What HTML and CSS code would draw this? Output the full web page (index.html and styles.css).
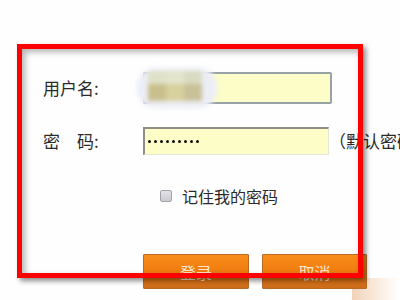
FILE: index.html
```html
<!DOCTYPE html>
<html lang="zh-CN">
<head>
<meta charset="utf-8">
<title>登录</title>
<link rel="stylesheet" href="styles.css">
</head>
<body>
<div class="page">
  <form class="login">
    <div class="row row-user">
      <label class="label">用户名:</label>
      <div class="field field-user">
        <div class="mosaic">
          <span class="m m1"></span><span class="m m2"></span><span class="m m3"></span>
          <span class="m m4"></span><span class="m m5"></span><span class="m m6"></span>
        </div>
      </div>
    </div>
    <div class="row row-pwd">
      <label class="label">密　码:</label>
      <div class="field field-pwd">
        <span class="dot"></span><span class="dot"></span><span class="dot"></span>
        <span class="dot"></span><span class="dot"></span><span class="dot"></span>
        <span class="dot"></span><span class="dot"></span><span class="dot"></span>
      </div>
      <span class="hint">（默认密码）</span>
    </div>
    <div class="remember">
      <span class="cb"></span>
      <span class="remember-text">记住我的密码</span>
    </div>
    <div class="buttons">
      <button type="button" class="btn btn-login">登录</button>
      <button type="button" class="btn btn-cancel">取消</button>
    </div>
  </form>
  <div class="redbox"></div>
</div>
</body>
</html>
```

FILE: styles.css
```css
html, body {
  margin: 0;
  padding: 0;
  background: #ffffff;
}
body {
  width: 400px;
  height: 300px;
  overflow: hidden;
  font-family: "Noto Sans CJK SC", "Noto Sans", sans-serif;
  color: #2a2a2a;
}
.page {
  position: relative;
  width: 400px;
  height: 300px;
  overflow: hidden;
  background: linear-gradient(to right, #f1d3b9, #fbeee3 60%, #ffffff) no-repeat right bottom / 48px 22px, #fefefe;
}
.login {
  display: flex;
  flex-direction: column;
  padding: 72px 0 0 43px;
}
.row {
  display: flex;
  align-items: center;
}
.row > * {
  flex-shrink: 0;
}
.label {
  width: 100px;
  font-size: 17px;
  line-height: 20px;
  white-space: nowrap;
}
.row-user {
  height: 31px;
}
.row-pwd {
  height: 28px;
  margin-top: 24px;
}
.field {
  position: relative;
  box-sizing: border-box;
  background: #fdfdc8;
}
.field-user {
  width: 189px;
  height: 32px;
  border: 2px solid #97a2a6;
  border-radius: 2px;
}
.field-pwd {
  width: 186px;
  height: 28px;
  border-top: 2px solid #8e8e86;
  border-left: 2px solid #8e8e86;
  border-right: 1px solid #e6e6d6;
  border-bottom: 1px solid #e6e6d6;
  display: flex;
  align-items: center;
  gap: 3px;
  padding-left: 3px;
}
.dot {
  width: 3px;
  height: 3px;
  border-radius: 50%;
  background: #111;
}
.hint {
  margin-left: 0;
  font-size: 17px;
  line-height: 20px;
  white-space: nowrap;
}
.mosaic {
  position: absolute;
  left: -8px;
  top: -6px;
  width: 80px;
  height: 40px;
  border-radius: 18px;
  background: #eceef6;
  filter: blur(2px);
  display: grid;
  grid-template-columns: repeat(3, 18px);
  grid-template-rows: 13px 17px;
  padding: 3px 0 0 11px;
  box-sizing: border-box;
}
.m1 { background: #dfe1c9; }
.m2 { background: #e3e4cd; }
.m3 { background: #d9dbc2; }
.m4 { background: #c8bf8d; }
.m5 { background: #d7d19e; }
.m6 { background: #c8c198; }
.remember {
  display: flex;
  align-items: center;
  margin-top: 31px;
  padding-left: 117px;
  height: 20px;
}
.cb {
  width: 12px;
  height: 12px;
  box-sizing: border-box;
  border: 1px solid #a2a2a8;
  border-radius: 2px;
  background: linear-gradient(#e4e4e8, #c9c9cf);
  margin-right: 10px;
}
.remember-text {
  font-size: 16px;
  line-height: 20px;
}
.buttons {
  display: flex;
  gap: 13px;
  margin-top: 48px;
  padding-left: 100px;
}
.btn {
  height: 35px;
  box-sizing: border-box;
  border: 1px solid #b86a22;
  border-radius: 1px;
  background: linear-gradient(#f88e1c, #f07c0e 50%, #cc6c1c);
  color: #fbe7cc;
  font-family: "Noto Sans CJK SC", sans-serif;
  font-size: 16px;
  line-height: 20px;
  padding: 0;
}
.btn-login { width: 106px; }
.btn-cancel { width: 105px; }
.redbox {
  position: absolute;
  left: 17px;
  top: 44px;
  width: 346px;
  height: 234px;
  box-sizing: border-box;
  border: 5px solid #ff0000;
  box-shadow: 3px 3px 5px rgba(0, 0, 0, 0.45), inset 3px 3px 6px rgba(0, 0, 0, 0.3);
  pointer-events: none;
}
```
